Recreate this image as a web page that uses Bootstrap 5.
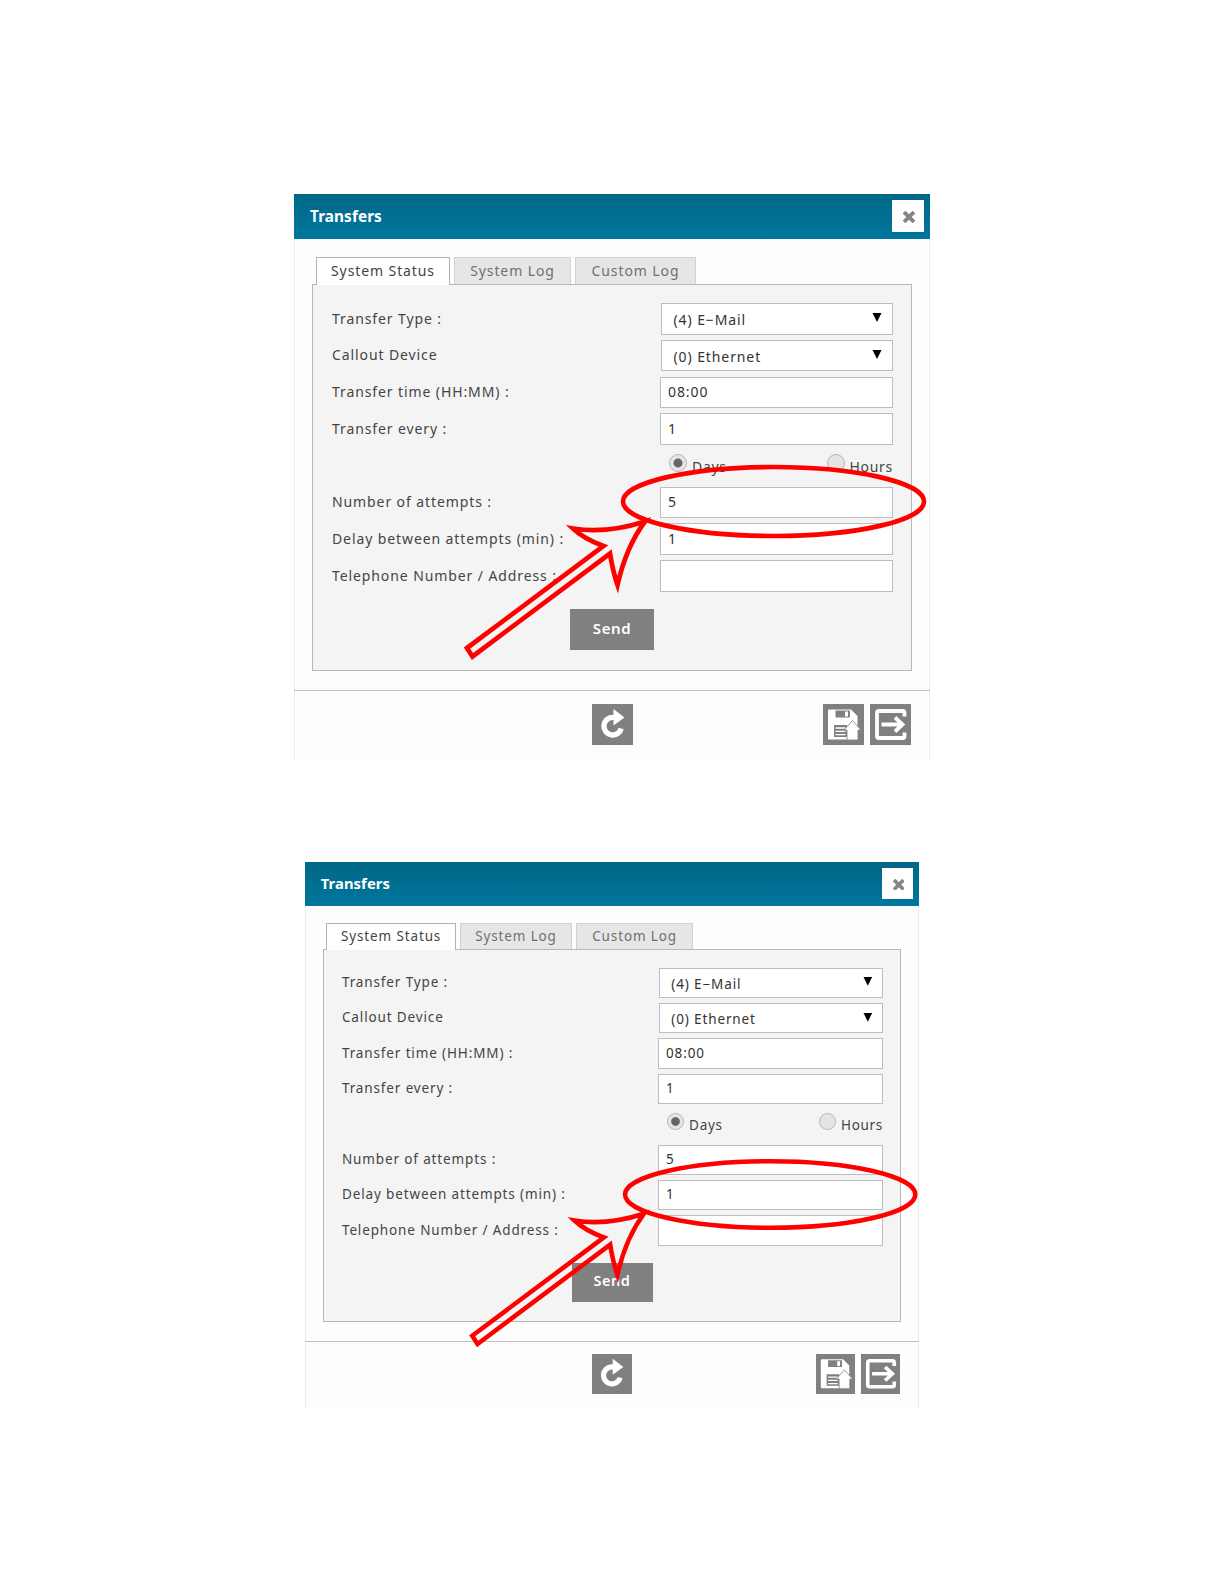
<!DOCTYPE html>
<html lang="en">
<head>
  <meta charset="UTF-8">
  <meta name="viewport" content="width=device-width, initial-scale=1.0">
  <title>Transfers</title>
  <link href="https://cdn.jsdelivr.net/npm/bootstrap@5.3.0/dist/css/bootstrap.min.css" rel="stylesheet">
  <style>
    body {
      font-family: "Noto Sans", "Open Sans", sans-serif;
      font-size: 14px;
      letter-spacing: 0.9px;
      color: #444;
      padding-top: 194px;
      height: 1584px;
      overflow: hidden;
    }
    .dialog {
      width: 636px;
      height: 566px;
      background: #fdfdfd;
      box-shadow: inset 1px 0 #ececec, inset -1px 0 #ececec;
    }
    .dialog-second {
      zoom: 0.9645;
      margin-top: 106px;
    }
    .dialog-head {
      height: 45px;
      padding: 0 6px 1px 16px;
      background: linear-gradient(#006786, #00779f);
      letter-spacing: 0.1px;
      font-size: 15.3px;
    }
    .close-box {
      width: 32px;
      height: 32px;
      padding: 2px 0 0 2px;
      background: #fff;
      border: 0;
    }
    .dialog-body {
      height: 452px;
      padding: 18px 18px 0 18px;
      border-bottom: 1px solid #c2c2c2;
    }
    .tab-row {
      gap: 4px;
      padding-left: 4px;
      height: 27px;
    }
    .tab-item {
      height: 27px;
      line-height: 25px;
      text-align: center;
      background: #e6e6e6;
      border: 1px solid #d2d2d2;
      border-bottom: 0;
      color: #707070;
      width: 117px;
    }
    .tab-item.active {
      width: 134px;
      height: 28px;
      background: #fff;
      border-color: #b2b2b2;
      color: #444;
      position: relative;
      z-index: 1;
    }
    .tab-item.wide {
      width: 121px;
    }
    .panel {
      height: 387px;
      padding: 15.6px 18px 0 19px;
      background: #f4f4f4;
      border: 1px solid #b8b8b8;
    }
    .form-line {
      height: 36.7px;
    }
    .form-line > span {
      padding-bottom: 1.5px;
    }
    .field {
      width: 233px;
      height: 31.5px;
      padding: 0 7px 1px;
      background: #fff;
      border: 1px solid #bdbdbd;
      color: #333;
    }
    .field.select {
      width: 232px;
      padding: 2px 10px 0 11.5px;
    }
    .radio-dot {
      width: 18px;
      height: 18px;
      border: 1.5px solid #b5b5b5;
      border-radius: 50%;
      background: #e4e4e4;
      margin-top: -6px;
    }
    .radio-dot.on {
      background: radial-gradient(circle, #666 0 4px, #e6e6e6 5px);
    }
    .radio-text {
      margin-left: 5px;
      padding-top: 2.5px;
      letter-spacing: 0.7px;
    }
    .send {
      width: 84px;
      height: 41px;
      margin: 15px 0 0 238px;
      background: #808080;
      color: #fff;
      border: 0;
      font-size: 15px;
      font-weight: 600;
      letter-spacing: 0.6px;
      padding-bottom: 4px;
    }
    .dialog-foot {
      height: 69px;
      padding: 13px 19px 0;
      display: grid;
      grid-template-columns: 1fr 41px 1fr;
    }
    .icon-box {
      width: 41px;
      height: 41px;
      background: #808080;
    }
    .note {
      inset: 0;
      overflow: visible;
      z-index: 2;
    }
  </style>
</head>
<body class="bg-white">
  <div id="dialogs"></div>

  <script src="https://cdn.jsdelivr.net/npm/bootstrap@5.3.0/dist/js/bootstrap.bundle.min.js"></script>
  <script>
    const rows = [
      { label: "Transfer Type :", value: "(4) E−Mail", select: true },
      { label: "Callout Device", value: "(0) Ethernet", select: true },
      { label: "Transfer time (HH:MM) :", value: "08:00" },
      { label: "Transfer every :", value: "1" },
      { radio: true },
      { label: "Number of attempts :", value: "5" },
      { label: "Delay between attempts (min) :", value: "1" },
      { label: "Telephone Number / Address :", value: "" }
    ];

    // ellipse and arrow move down one row in the second dialog
    const dialogs = [
      { cls: "", ellipse: [479.5, 307.5], arrow: [0, 0] },
      { cls: "dialog-second", ellipse: [482.3, 344.7], arrow: [0.4, 37.2] }
    ];

    function renderRow(row) {
      if (row.radio) {
        return `
          <div class="form-line d-flex justify-content-end align-items-center">
            <div class="d-flex justify-content-between align-items-center" style="width:224px">
              <div class="d-flex align-items-center"><span class="radio-dot on"></span><span class="radio-text">Days</span></div>
              <div class="d-flex align-items-center"><span class="radio-dot"></span><span class="radio-text">Hours</span></div>
            </div>
          </div>`;
      }
      const arrow = row.select
        ? `<svg width="10" height="9" style="margin-top:-4px"><path d="M0.5 0h9L5 9z" fill="#000"/></svg>`
        : "";
      return `
        <div class="form-line d-flex justify-content-between align-items-center">
          <span>${row.label}</span>
          <div class="field ${row.select ? "select" : ""} d-flex justify-content-between align-items-center"><span>${row.value}</span>${arrow}</div>
        </div>`;
    }

    function renderDialog(d) {
      return `
        <div class="dialog ${d.cls} position-relative mx-auto">
          <div class="dialog-head d-flex justify-content-between align-items-center text-white fw-bold">
            <span>Transfers</span>
            <button class="close-box d-flex align-items-center justify-content-center" aria-label="Close">
              <svg width="12" height="12" viewBox="0 0 12 12"><path d="M2.4 2.4l7.2 7.2M9.6 2.4L2.4 9.6" stroke="#858585" stroke-width="3.8" stroke-linecap="square" fill="none"/></svg>
            </button>
          </div>
          <div class="dialog-body">
            <div class="tab-row d-flex">
              <div class="tab-item active">System Status</div>
              <div class="tab-item">System Log</div>
              <div class="tab-item wide">Custom Log</div>
            </div>
            <div class="panel">
              ${rows.map(renderRow).join("")}
              <button class="send d-block">Send</button>
            </div>
          </div>
          <div class="dialog-foot">
            <span></span>
            <span class="icon-box">
              <svg class="d-block" width="41" height="41" viewBox="0 0 41 41">
                <path d="M24 13.4H20.5A8.8 8.8 0 1 0 29.2 24.5" fill="none" stroke="#fff" stroke-width="5.4"/>
                <path d="M21.5 5L32.5 13.5 21.5 21.5z" fill="#fff"/>
              </svg>
            </span>
            <div class="d-flex justify-content-end" style="gap:6px">
              <span class="icon-box">
                <svg class="d-block" width="41" height="41" viewBox="0 0 41 41">
                  <path d="M5 6.5Q5 5.5 6 5.5H28L34.5 12V35.5H6Q5 35.5 5 34.5z" fill="#fff"/>
                  <path d="M12.5 6.5h14.5v7H12.5z" fill="#808080"/>
                  <path d="M22 7.5h3v5h-3z" fill="#fff"/>
                  <path d="M11 21h13v12H11z" fill="#808080"/>
                  <path d="M12.5 24h10M12.5 27.3h10M12.5 30.6h10" stroke="#fff" stroke-width="1.3"/>
                  <path d="M29.5 16.5L38 26H35V36H24V26H21z" fill="#fff" stroke="#808080" stroke-width="0.8"/>
                </svg>
              </span>
              <span class="icon-box">
                <svg class="d-block" width="41" height="41" viewBox="0 0 41 41">
                  <path d="M34.5 12.5V9Q34.5 7 32.5 7H9Q7 7 7 9V32Q7 34 9 34H32.5Q34.5 34 34.5 32V28.5" fill="none" stroke="#fff" stroke-width="3.8"/>
                  <path d="M11.5 20.5H32M25 13.5L32.5 20.5 25 27.5" fill="none" stroke="#fff" stroke-width="3.8"/>
                </svg>
              </span>
            </div>
          </div>
          <svg class="note position-absolute" width="636" height="566" fill="none" stroke="#f00" stroke-width="4.7">
            <ellipse cx="${d.ellipse[0]}" cy="${d.ellipse[1]}" rx="150.5" ry="34.5"/>
            <path transform="translate(${d.arrow})" stroke-miterlimit="10" d="M173 454L309.5 352Q290 345 279 334.5Q312 340 351 327.5Q332 353 323.5 391Q319 378 316 359.5L178.5 462.5z"/>
          </svg>
        </div>`;
    }

    document.getElementById("dialogs").innerHTML = dialogs.map(renderDialog).join("");
  </script>
</body>
</html>
